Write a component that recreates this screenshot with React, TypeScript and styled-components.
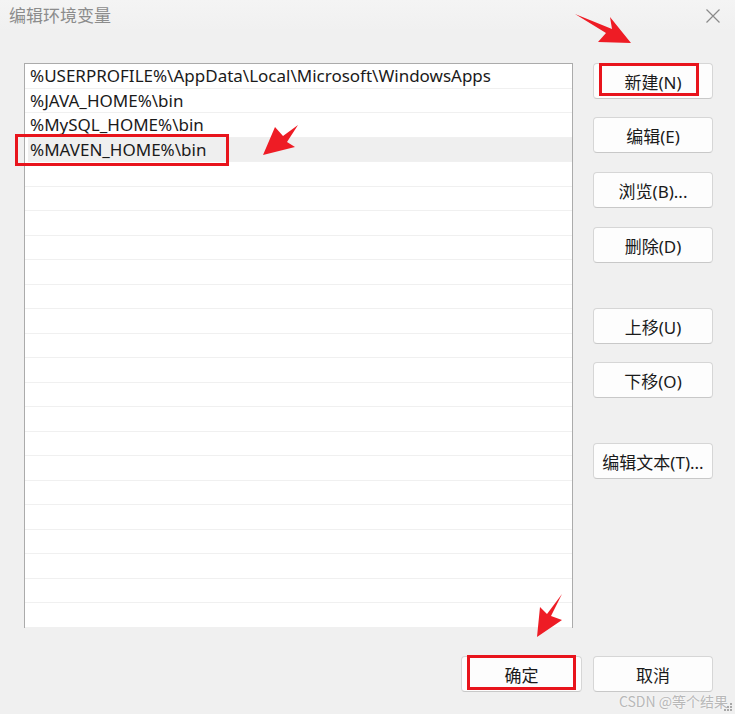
import React from "react";
import styled, { createGlobalStyle } from "styled-components";

const GlobalStyle = createGlobalStyle`
  * { box-sizing: border-box; }
  body {
    margin: 0;
    background: #f0f0f0;
    font-family: "Noto Sans", "Noto Sans CJK SC", sans-serif;
  }
`;

const Window = styled.div`
  position: relative;
  width: 735px;
  height: 714px;
  background: #f0f0f0;
  display: flex;
  flex-direction: column;
  overflow: hidden;
`;

const TitleBar = styled.div`
  height: 31px;
  display: flex;
  align-items: center;
  justify-content: space-between;
  padding: 0 14px 2px 9px;
  background: linear-gradient(#f4f4f4, #f0f0f0);
`;

const Title = styled.span`
  font-family: "Noto Sans CJK SC", sans-serif;
  font-size: 17px;
  color: #8c8c8c;
`;

const CloseIcon = styled.svg`
  width: 16px;
  height: 16px;
  margin-top: 2px;
`;

const Body = styled.div`
  display: flex;
  gap: 20px;
  padding: 32px 22px 0 24px;
`;

const PathList = styled.ul`
  list-style: none;
  margin: 0;
  padding: 0;
  width: 549px;
  height: 565px;
  background: #fff;
  border: 1px solid #ababab;
`;

const Row = styled.li<{ $selected?: boolean }>`
  position: relative;
  height: 24.5px;
  display: flex;
  align-items: center;
  padding-left: ${(p) => (p.$selected ? "2px" : "5px")};
  margin-left: ${(p) => (p.$selected ? "3px" : "0")};
  border-bottom: 1px solid #f0f0f0;
  background: ${(p) => (p.$selected ? "#efefef" : "transparent")};
  font-size: 17px;
  color: #1a1a1a;
  white-space: nowrap;
`;

const ButtonColumn = styled.div`
  display: flex;
  flex-direction: column;
  width: 120px;
`;

const Button = styled.button<{ $gap?: number; $width?: number }>`
  position: relative;
  width: ${(p) => p.$width ?? 120}px;
  height: 36px;
  margin-top: ${(p) => p.$gap ?? 0}px;
  background: #fdfdfd;
  border: 1px solid #d6d6d6;
  border-bottom-color: #c8c8c8;
  border-radius: 4px;
  font-family: "Noto Sans", "Noto Sans CJK SC", sans-serif;
  font-size: 17px;
  color: #1a1a1a;
  padding: 0;
`;

const Footer = styled.div`
  display: flex;
  justify-content: flex-end;
  gap: 11px;
  padding: 28px 22px 0 0;
`;

const Highlight = styled.span<{ $l: number; $t: number; $w: number; $h: number }>`
  position: absolute;
  left: ${(p) => p.$l}px;
  top: ${(p) => p.$t}px;
  width: ${(p) => p.$w}px;
  height: ${(p) => p.$h}px;
  border: 3px solid #e8141c;
  pointer-events: none;
`;

const Arrows = styled.svg`
  position: absolute;
  left: 0;
  top: 0;
  width: 735px;
  height: 714px;
  pointer-events: none;
`;

const Watermark = styled.span`
  position: absolute;
  right: 7px;
  bottom: 3px;
  font-family: "Noto Sans CJK SC", sans-serif;
  font-size: 14px;
  color: #b8b8b8;
  text-shadow: 0 0 2px #fff;
`;

const Grip = styled.svg`
  position: absolute;
  right: 2px;
  bottom: 2px;
  width: 12px;
  height: 12px;
`;

const paths = [
  "%USERPROFILE%\\AppData\\Local\\Microsoft\\WindowsApps",
  "%JAVA_HOME%\\bin",
  "%MySQL_HOME%\\bin",
  "%MAVEN_HOME%\\bin",
];

const sideButtons = [
  { label: "新建(N)", gap: 0 },
  { label: "编辑(E)", gap: 18 },
  { label: "浏览(B)...", gap: 19 },
  { label: "删除(D)", gap: 19 },
  { label: "上移(U)", gap: 45 },
  { label: "下移(O)", gap: 18 },
  { label: "编辑文本(T)...", gap: 45 },
];

const TOTAL_ROWS = 23;

export default function App() {
  const rows = Array.from({ length: TOTAL_ROWS }, (_, i) => paths[i] ?? "");

  return (
    <Window>
      <GlobalStyle />
      <TitleBar>
        <Title>编辑环境变量</Title>
        <CloseIcon viewBox="0 0 16 16">
          <path d="M1.5 1.5 L14.5 14.5 M14.5 1.5 L1.5 14.5" stroke="#8a8a8a" strokeWidth="1.2" fill="none" />
        </CloseIcon>
      </TitleBar>

      <Body>
        <PathList>
          {rows.map((text, i) => (
            <Row key={i} $selected={i === 3}>
              {text}
              {i === 3 && <Highlight $l={-13} $t={-4} $w={214} $h={32} />}
            </Row>
          ))}
        </PathList>

        <ButtonColumn>
          {sideButtons.map((b, i) => (
            <Button key={b.label} $gap={b.gap}>
              {b.label}
              {i === 0 && <Highlight $l={5} $t={-1} $w={100} $h={33} />}
            </Button>
          ))}
        </ButtonColumn>
      </Body>

      <Footer>
        <Button $width={121}>
          确定
          <Highlight $l={5} $t={-2} $w={109} $h={35} />
        </Button>
        <Button>取消</Button>
      </Footer>

      <Arrows viewBox="0 0 735 714">
        <polygon points="575,14 612,29 610,17 631,43 598,42 606,33" fill="#ee1c25" />
        <polygon points="298,125 283,136 275,127 263,155 295,147 287,142" fill="#ee1c25" />
        <polygon points="562,594 547,614 540,607 537,637 562,620 551,616" fill="#ee1c25" />
      </Arrows>

      <Watermark>CSDN @等个结果</Watermark>
      <Grip viewBox="0 0 12 12">
        {[
          [9, 3], [6, 6], [9, 6], [3, 9], [6, 9], [9, 9],
        ].map(([x, y]) => (
          <rect key={`${x}-${y}`} x={x} y={y} width="2" height="2" fill="#a8a8a8" />
        ))}
      </Grip>
    </Window>
  );
}
